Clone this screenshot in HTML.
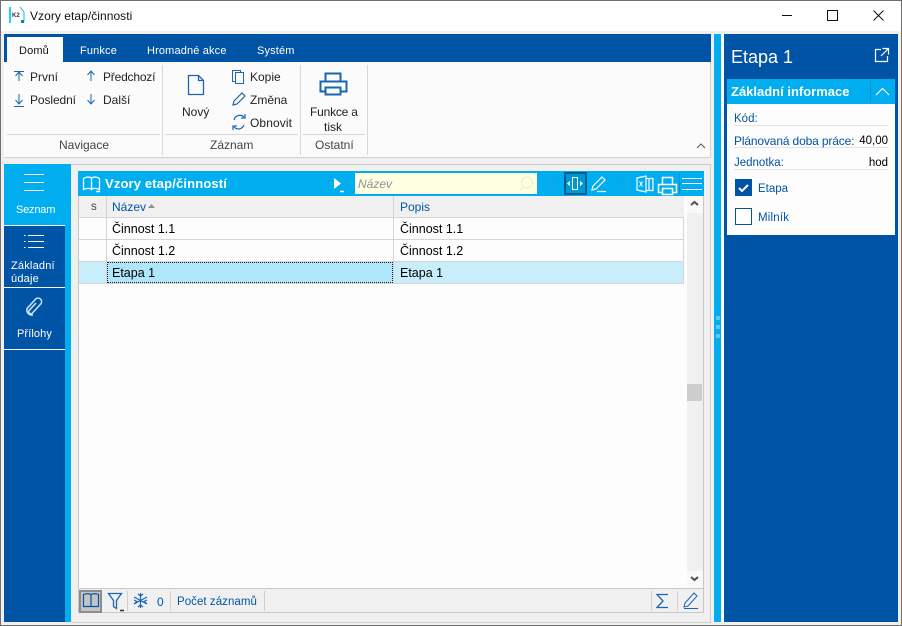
<!DOCTYPE html>
<html><head><meta charset="utf-8">
<style>
html,body{margin:0;padding:0}
body{width:902px;height:626px;position:relative;overflow:hidden;background:#f0f0f0;font-family:"Liberation Sans",sans-serif;font-size:12px;color:#000}
.a{position:absolute}
.t{position:absolute;white-space:nowrap;line-height:14px}
.w{color:#fff}
.b{color:#0054a6}
svg{position:absolute;overflow:visible}
</style></head><body>
<!-- window frame -->
<div class="a" style="left:0;top:0;width:902px;height:31px;background:#fff"></div>
<div class="a" style="left:0;top:0;width:902px;height:1px;background:#707070"></div>
<div class="a" style="left:0;top:0;width:1px;height:626px;background:#707070"></div>
<div class="a" style="left:901px;top:0;width:1px;height:626px;background:#707070"></div>
<div class="a" style="left:0;top:625px;width:902px;height:1px;background:#707070"></div>
<!-- app icon -->
<div class="a" style="left:9px;top:7px;width:2px;height:16px;background:#19d4f0"></div>
<div class="a" style="left:12px;top:13px;font:bold 6px 'Liberation Sans';color:#333;line-height:6px">K2</div>
<svg style="left:0;top:0" width="40" height="30"><path d="M20 7l4 5v9l-2 2" fill="none" stroke="#19b4e0" stroke-width="1"/><path d="M21 20l3 0 0 3-3 0z" fill="#0a7cc0"/></svg>
<div class="t" style="left:30px;top:9px;font-size:12px;color:#111;letter-spacing:.05px">Vzory etap/činnosti</div>
<!-- window controls -->
<svg style="left:0;top:0" width="902" height="31"><path d="M782 15.500h10" stroke="#111" fill="none"/><rect x="827.500" y="10.500" width="10" height="10" fill="none" stroke="#111"/><path d="M873.500 10.500l10 10M883.500 10.500l-10 10" stroke="#111" fill="none"/></svg>

<!-- ribbon -->
<div class="a" style="left:4px;top:34px;width:707px;height:28px;background:#0054a6"></div>
<div class="a" style="left:7px;top:37px;width:56px;height:25px;background:#fbfbfb"></div>
<div class="a" style="left:4px;top:62px;width:706px;height:95px;background:#fbfbfb;border-right:1px solid #d0d0d0;border-bottom:1px solid #d0d0d0"></div>
<div class="t" style="left:19px;top:44px;font-size:11px;color:#111;letter-spacing:.15px">Domů</div>
<div class="t w" style="left:80px;top:44px;font-size:11px;letter-spacing:.15px">Funkce</div>
<div class="t w" style="left:147px;top:44px;font-size:11px;letter-spacing:.15px">Hromadné akce</div>
<div class="t w" style="left:257px;top:44px;font-size:11px;letter-spacing:.15px">Systém</div>
<!-- ribbon separators -->
<div class="a" style="left:162px;top:65px;width:1px;height:90px;background:#d8d8d8"></div>
<div class="a" style="left:300px;top:65px;width:1px;height:90px;background:#d8d8d8"></div>
<div class="a" style="left:367px;top:65px;width:1px;height:90px;background:#d8d8d8"></div>
<div class="a" style="left:7px;top:134px;width:153px;height:1px;background:#d8d8d8"></div>
<div class="a" style="left:165px;top:134px;width:133px;height:1px;background:#d8d8d8"></div>
<div class="a" style="left:303px;top:134px;width:62px;height:1px;background:#d8d8d8"></div>
<div class="t" style="left:30px;top:70px;color:#222">První</div>
<div class="t" style="left:30px;top:93px;color:#222;letter-spacing:-.1px">Poslední</div>
<div class="t" style="left:103px;top:70px;color:#222;letter-spacing:-.2px">Předchozí</div>
<div class="t" style="left:103px;top:93px;color:#222">Další</div>
<div class="t" style="left:182px;top:105px;color:#222">Nový</div>
<div class="t" style="left:250px;top:70px;color:#222">Kopie</div>
<div class="t" style="left:250px;top:93px;color:#222">Změna</div>
<div class="t" style="left:250px;top:116px;color:#222;letter-spacing:.1px">Obnovit</div>
<div class="t" style="left:310px;top:105px;color:#222;letter-spacing:-.2px">Funkce a</div>
<div class="t" style="left:324px;top:120px;color:#222">tisk</div>
<div class="t" style="left:59px;top:138px;color:#444">Navigace</div>
<div class="t" style="left:210px;top:138px;color:#444">Záznam</div>
<div class="t" style="left:315px;top:138px;color:#444">Ostatní</div>
<svg style="left:0;top:0" width="720" height="160" fill="none" stroke="#1a66b0" stroke-width="1">
<path d="M14 71.500h10M19 81V72M15.500 76l3.500-4 3.500 4"/>
<path d="M19 94v10M15.500 100l3.500 4 3.500-4M14 106.500h10"/>
<path d="M91 81V71M87.500 75l3.500-4 3.500 4"/>
<path d="M91 94v10M87.500 100l3.500 4 3.500-4"/>
<path d="M188.500 75.500h10l5 5v14h-15zM198.500 75.500v5h5" stroke-width="1.300"/>
<path d="M235.500 81.500h-3v-11h8v2M235.500 72.500h8v11h-8z"/>
<path d="M233 105l1-4 8-8 3 3-8 8z" stroke-width="1.200"/>
<path d="M234 120a6 6 0 0 1 10-3M244 125a6 6 0 0 1-10 2M245 114v4h-4M233 130v-4h4" stroke-width="1.200"/>
<path d="M325.500 81.500v-8h15v8M325.500 91.500h-5v-10h26v10h-5M325.500 87.500h15v7h-15z" stroke-width="2"/>
<path d="M697 148l4-4 4 4" stroke="#555"/>
</svg>

<!-- main content box -->
<div class="a" style="left:71px;top:164px;width:640px;height:459px;box-sizing:border-box;border-top:1px solid #c8c8c8;border-right:1px solid #d0d0d0;border-bottom:1px solid #d0d0d0"></div>
<!-- left rail -->
<div class="a" style="left:4px;top:164px;width:67px;height:458px;background:#00aeef"></div>
<div class="a" style="left:4px;top:226px;width:61px;height:396px;background:#0054a6"></div>
<div class="a" style="left:4px;top:225px;width:61px;height:1px;background:#fff"></div>
<div class="a" style="left:4px;top:287px;width:61px;height:1px;background:#fff"></div>
<div class="a" style="left:4px;top:349px;width:61px;height:1px;background:#fff"></div>
<svg style="left:0;top:160px" width="70" height="200" fill="none" stroke="#fff" stroke-width="1">
<path d="M24 14.500h20M24 22.500h20M24 30.500h20" />
<path d="M28 75.500h16M28 81.500h16M28 87.500h16"/>
<path d="M24 75.500h1.500M24 81.500h1.500M24 87.500h1.500"/>
<path d="M36 143l-7 7.500a2.200 2.200 0 0 0 3 3l9-9.800a3.600 3.600 0 0 0-5-5l-9 9.800a5.200 5.200 0 0 0 6 6.500" stroke="#cfe2f3" stroke-width="1.500"/>
</svg>
<div class="t w" style="left:16px;top:203px;font-size:11px;letter-spacing:-.2px">Seznam</div>
<div class="t w" style="left:11px;top:259px;font-size:11px;letter-spacing:.2px">Základní</div>
<div class="t w" style="left:11px;top:272px;font-size:11px;letter-spacing:.2px">údaje</div>
<div class="t w" style="left:17px;top:327px;font-size:11px;letter-spacing:.1px">Přílohy</div>

<!-- grid panel -->
<div class="a" style="left:78px;top:171px;width:626px;height:442px;background:#fdfdfd;border-left:1px solid #c8c8c8;border-right:1px solid #c8c8c8;border-bottom:1px solid #c8c8c8;box-sizing:border-box"></div>
<div class="a" style="left:78px;top:171px;width:626px;height:25px;background:#00aeef"></div>
<div class="t w" style="left:105px;top:177px;font-size:13px;font-weight:bold;letter-spacing:.15px">Vzory etap/činností</div>
<div class="a" style="left:355px;top:173px;width:182px;height:21px;background:#ffffe1"></div>
<div class="t" style="left:358px;top:177px;font-size:12px;font-style:italic;color:#909090">Název</div>
<div class="t" style="left:548px;top:177px;font-size:13px;color:#1c9fd8">?</div>
<div class="t" style="left:619px;top:177px;font-size:13px;color:#1c9fd8">?</div>
<div class="a" style="left:564px;top:172px;width:23px;height:23px;background:#0098d4;border:2px solid #005f8f;box-sizing:border-box"></div>
<div class="a" style="left:679px;top:173px;width:1px;height:21px;background:#0790c8"></div>
<svg style="left:0;top:165px" width="720" height="40" fill="none" stroke="#fff" stroke-width="1">
<path d="M83.500 13.500c3-2 7-2 8 0 1-2 5-2 8 0v11c-3-1.500-7-1.500-8 0-1-1.500-5-1.500-8 0zM91.500 13.500v11" stroke-width="1.300"/>
<path d="M96 26.500h4" stroke-width="1.500"/>
<path d="M334 13l7 5.500-7 5.500z" fill="#fff" stroke="none"/><path d="M340 26.500h4" stroke-width="1.500"/>
<circle cx="527" cy="17.500" r="5.500" stroke="#eaeace"/><path d="M523 22l-3 3" stroke="#eaeace"/>
<path d="M572.500 12.500h5v12h-5z"/><path d="M570 16l-3 2.500 3 2.500zM580 16l3 2.500-3 2.500z" fill="#fff" stroke="none"/>
<path d="M592 25l1-4 9-9 3 3-9 9zM597 26.500h9" stroke-width="1.200"/>
<path d="M637 13l9-2v16l-9-2zM646 13.500h7v12h-7M649 13.500v12" stroke-width="1.200"/>
<path d="M639.500 16.500l3 5M642.500 16.500l-3 5"/>
<path d="M662.500 19.500v-7h10v7M662.500 27.500h-4v-8h18v8h-4M662.500 23.500h10v6h-10z" stroke-width="1.500"/>
<path d="M682 13.500h20M682 18.500h20M682 24.500h20" />
</svg>
<!-- table header -->
<div class="a" style="left:79px;top:196px;width:605px;height:21px;background:#f0f0f0"></div>
<div class="a" style="left:79px;top:217px;width:605px;height:1px;background:#d4d4d4"></div>
<div class="a" style="left:106px;top:196px;width:1px;height:88px;background:#d4d4d4"></div>
<div class="a" style="left:393px;top:196px;width:1px;height:88px;background:#d4d4d4"></div>
<div class="a" style="left:683px;top:218px;width:1px;height:66px;background:#d4d4d4"></div>
<div class="t" style="left:91px;top:200px;font-size:11.500px;color:#444">s</div>
<div class="t b" style="left:112px;top:200px;font-size:12px">Název</div>
<svg style="left:0;top:196px" width="160" height="20"><path d="M148 12l3.500-4 3.500 4z" fill="#909090"/></svg>
<div class="t b" style="left:400px;top:200px;font-size:12px">Popis</div>
<!-- rows -->
<div class="a" style="left:79px;top:239px;width:604px;height:1px;background:#d4d4d4"></div>
<div class="a" style="left:79px;top:261px;width:604px;height:1px;background:#d4d4d4"></div>
<div class="a" style="left:79px;top:262px;width:27px;height:21px;background:#c9eefb"></div>
<div class="a" style="left:107px;top:262px;width:286px;height:21px;background:#b0e6fa;outline:1px dotted #222;outline-offset:-1px"></div>
<div class="a" style="left:394px;top:262px;width:289px;height:21px;background:#c9eefb"></div>
<div class="a" style="left:79px;top:283px;width:604px;height:1px;background:#d4d4d4"></div>
<div class="t" style="left:112px;top:222px;font-size:12.500px">Činnost 1.1</div>
<div class="t" style="left:400px;top:222px;font-size:12.500px">Činnost 1.1</div>
<div class="t" style="left:112px;top:244px;font-size:12.500px">Činnost 1.2</div>
<div class="t" style="left:400px;top:244px;font-size:12.500px">Činnost 1.2</div>
<div class="t" style="left:112px;top:266px;font-size:12.500px">Etapa 1</div>
<div class="t" style="left:400px;top:266px;font-size:12.500px">Etapa 1</div>
<!-- scrollbar -->
<div class="a" style="left:687px;top:196px;width:16px;height:392px;background:#f0f0f0"></div>
<div class="a" style="left:687px;top:196px;width:16px;height:17px;background:#f9f9f9"></div>
<div class="a" style="left:687px;top:571px;width:16px;height:17px;background:#f9f9f9"></div>
<div class="a" style="left:687px;top:384px;width:15px;height:17px;background:#cdcdcd"></div>
<svg style="left:0;top:190px" width="710" height="400" fill="none" stroke="#505050" stroke-width="2"><path d="M691 15l3.500-3 3.500 3"/><path d="M691 387l3.500 3 3.500-3"/></svg>
<!-- status bar -->
<div class="a" style="left:79px;top:588px;width:624px;height:1px;background:#c8c8c8"></div>
<div class="a" style="left:79px;top:589px;width:624px;height:23px;background:#f0f0f0"></div>
<div class="a" style="left:79px;top:590px;width:23px;height:23px;box-sizing:border-box;background:#c4c4c4;border:2px solid #8c8c8c"></div>
<div class="a" style="left:127px;top:591px;width:1px;height:20px;background:#d0d0d0"></div>
<div class="a" style="left:170px;top:591px;width:1px;height:20px;background:#d0d0d0"></div>
<div class="a" style="left:264px;top:591px;width:1px;height:20px;background:#d0d0d0"></div>
<div class="a" style="left:651px;top:591px;width:1px;height:20px;background:#d0d0d0"></div>
<div class="a" style="left:677px;top:591px;width:1px;height:20px;background:#d0d0d0"></div>
<div class="t b" style="left:157px;top:595px;font-size:12px">0</div>
<div class="t b" style="left:177px;top:595px;font-size:11.500px;letter-spacing:.05px">Počet záznamů</div>
<svg style="left:0;top:585px" width="710" height="35" fill="none" stroke="#1a66b0" stroke-width="1">
<path d="M83.500 9.500c2-1 6-1 7.500 0 1.500-1 5.500-1 7.500 0v12h-15zM91 9.500v12" stroke="#0054a6" stroke-width="1.200"/>
<path d="M108.500 8.500h13l-5 7v8l-3-2v-6z" stroke-width="1.300"/><path d="M120 25.500h4" stroke="#333" stroke-width="1.500"/>
<path d="M140.500 8v15M134 12l13 7M147 12l-13 7M138 9l2.500 2 2.500-2M138 22l2.500-2 2.500 2M134 15l3 1.500-3 2.500M147 15l-3 1.500 3 2.500" stroke-width="1.200"/>
<path d="M668 9.500h-11l6 6.500-6 6.500h11" stroke-width="1.300"/>
<path d="M684 22l1-4 9-10 3 3-9 10zM684 23.500h14" />
</svg>
<!-- splitter -->
<div class="a" style="left:714px;top:34px;width:7px;height:588px;background:#00aeef"></div>
<div class="a" style="left:716px;top:316px;width:4px;height:4px;background:#5ccbf5;border-radius:1px"></div>
<div class="a" style="left:716px;top:325px;width:4px;height:4px;background:#5ccbf5;border-radius:1px"></div>
<div class="a" style="left:716px;top:334px;width:4px;height:4px;background:#5ccbf5;border-radius:1px"></div>
<div class="a" style="left:721px;top:34px;width:3px;height:588px;background:#fff"></div>
<!-- right panel -->
<div class="a" style="left:724px;top:34px;width:174px;height:588px;background:#0054a6"></div>
<div class="t w" style="left:731px;top:46px;font-size:18px;line-height:23px">Etapa 1</div>
<svg style="left:0;top:0" width="902" height="110" fill="none" stroke="#fff" stroke-width="1.200">
<path d="M881 49.500h-5.500v12h12v-5.500"/><path d="M882.500 48.500h6v6M888 49l-7 7"/>
</svg>
<div class="a" style="left:727px;top:79px;width:168px;height:25px;background:#00aeef"></div>
<div class="a" style="left:870px;top:81px;width:1px;height:21px;background:#1590cc"></div>
<svg style="left:0;top:0" width="902" height="110" fill="none" stroke="#fff" stroke-width="1.200"><path d="M876 95l6.500-6.500 6.500 6.500"/></svg>
<div class="t w" style="left:731px;top:85px;font-size:13px;font-weight:bold">Základní informace</div>
<div class="a" style="left:727px;top:104px;width:168px;height:131px;background:#fdfdfd"></div>
<div class="a" style="left:734px;top:125px;width:154px;height:1px;background:#e4e4e4"></div>
<div class="a" style="left:734px;top:147px;width:154px;height:1px;background:#e4e4e4"></div>
<div class="a" style="left:734px;top:169px;width:154px;height:1px;background:#e4e4e4"></div>
<div class="t b" style="left:734px;top:112px;font-size:11.500px">Kód:</div>
<div class="t b" style="left:734px;top:134px;font-size:12px;letter-spacing:-.15px">Plánovaná doba práce:</div>
<div class="t" style="right:14px;top:134px;font-size:11.500px">40,00</div>
<div class="t b" style="left:734px;top:156px;font-size:11.500px">Jednotka:</div>
<div class="t" style="right:14px;top:156px;font-size:11.500px">hod</div>
<div class="a" style="left:735px;top:179px;width:17px;height:17px;background:#0054a6"></div>
<svg style="left:0;top:0" width="902" height="200" fill="none" stroke="#fff" stroke-width="2"><path d="M739 188l3 3 6-6"/></svg>
<div class="t b" style="left:758px;top:182px;font-size:11.500px">Etapa</div>
<div class="a" style="left:735px;top:208px;width:17px;height:17px;box-sizing:border-box;border:1px solid #0054a6;background:#fff"></div>
<div class="t b" style="left:758px;top:211px;font-size:11.500px;letter-spacing:.2px">Milník</div>
</body></html>
